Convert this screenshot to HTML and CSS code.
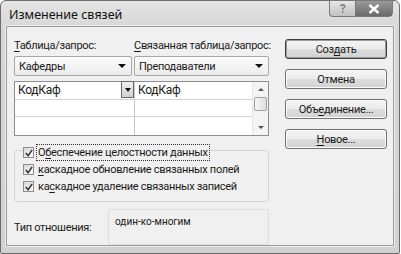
FILE: index.html
```html
<!DOCTYPE html>
<html>
<head>
<meta charset="utf-8">
<link rel="stylesheet" href="styles.css">
</head>
<body>
<div class="win">
  <div class="titlebar">
    <span class="title">Изменение связей</span>
    <div class="caps">
      <span class="cap help">?</span>
      <span class="cap close"><svg width="12" height="10" viewBox="0 0 12 10"><path d="M1.5 1 L10.5 9 M10.5 1 L1.5 9" stroke="#fff" stroke-width="2.4"/></svg></span>
    </div>
  </div>
  <div class="client">
    <div class="left">
      <div class="pickers">
        <div class="picker p1">
          <div class="lbl"><u>Т</u>аблица/запрос:</div>
          <div class="combo"><span>Кафедры</span><span class="arrow"></span></div>
        </div>
        <div class="picker p2">
          <div class="lbl"><u>С</u>вязанная таблица/запрос:</div>
          <div class="combo"><span>Преподаватели</span><span class="arrow"></span></div>
        </div>
      </div>
      <div class="grid">
        <div class="col c1">
          <div class="cell"><span>КодКаф</span><span class="dd"><span class="arrow"></span></span></div>
          <div class="cell"></div>
          <div class="cell last"></div>
        </div>
        <div class="col c2">
          <div class="cell"><span>КодКаф</span></div>
          <div class="cell"></div>
          <div class="cell last"></div>
        </div>
        <div class="scroll">
          <span class="sarrow up"></span>
          <span class="thumb"></span>
          <span class="sarrow down"></span>
        </div>
      </div>
      <div class="group">
        <div class="chk focus"><span class="box"><svg width="8" height="8" viewBox="0 0 9 9"><path d="M1 4.5 L3.5 7.5 L8 1" fill="none" stroke="#333" stroke-width="1.7"/></svg></span><span class="ctext">О<u>б</u>еспечение целостности данных</span></div>
        <div class="chk"><span class="box"><svg width="8" height="8" viewBox="0 0 9 9"><path d="M1 4.5 L3.5 7.5 L8 1" fill="none" stroke="#333" stroke-width="1.7"/></svg></span><span class="ctext"><u>к</u>аскадное обновление связанных полей</span></div>
        <div class="chk"><span class="box"><svg width="8" height="8" viewBox="0 0 9 9"><path d="M1 4.5 L3.5 7.5 L8 1" fill="none" stroke="#333" stroke-width="1.7"/></svg></span><span class="ctext">ка<u>с</u>кадное удаление связанных записей</span></div>
      </div>
      <div class="typerow">
        <span class="tlabel">Тип отношения:</span>
        <div class="tbox">один-ко-многим</div>
      </div>
    </div>
    <div class="buttons">
      <div class="btn default">Соз<u>д</u>ать</div>
      <div class="btn">Отмена</div>
      <div class="btn">Объ<u>е</u>динение...</div>
      <div class="btn"><u>Н</u>овое...</div>
    </div>
  </div>
</div>
</body>
</html>
```

FILE: styles.css
```css
html, body {
  margin: 0;
  padding: 0;
  background: #ffffff;
}
body {
  width: 401px;
  height: 254px;
  overflow: hidden;
  font-family: Roboto, "Noto Sans", sans-serif;
  font-size: 11px;
  letter-spacing: -0.3px;
  color: #1a1a1a;
}
u { text-decoration: underline; text-underline-offset: 2px; }
.win {
  box-sizing: border-box;
  width: 400px;
  height: 254px;
  border: 1px solid #6c6c6c;
  border-radius: 6px 6px 2px 2px;
  background: linear-gradient(#e4e4e4, #d6d6d6 30px, #d2d2d2);
  display: flex;
  flex-direction: column;
  padding: 0 5px 7px 5px;
}
.titlebar {
  height: 25px;
  display: flex;
  align-items: flex-start;
}
.title {
  font-family: "Noto Sans", sans-serif;
  font-size: 12.5px;
  letter-spacing: 0;
  color: #111;
  margin: 5px 0 0 3px;
}
.caps {
  margin-left: auto;
  margin-right: 1px;
  display: flex;
  margin-top: -1px;
}
.cap {
  height: 17px;
  display: flex;
  align-items: center;
  justify-content: center;
  box-sizing: border-box;
  border: 1px solid #7a7a7a;
}
.help {
  width: 26px;
  border-radius: 0 0 0 4px;
  border-right: none;
  background: linear-gradient(#e6e6e6, #c2c2c2);
  color: #7a7a7a;
  font-size: 12px;
  font-weight: bold;
  text-shadow: 0 0 1px #fff;
}
.close {
  width: 38px;
  border-radius: 0 0 4px 0;
  background: linear-gradient(#9a9a9a, #6a6a6a);
}
.client {
  flex: 1;
  background: #f0f0f0;
  border: 1px solid #9c9c9c;
  box-shadow: 0 0 0 1px #ececec;
  display: flex;
  padding: 11px 0 0 7px;
}
.left {
  width: 255px;
  display: flex;
  flex-direction: column;
}
.pickers {
  display: flex;
  gap: 2px;
}
.picker.p1 { width: 118px; }
.picker.p2 { width: 135px; }
.lbl {
  height: 16px;
  line-height: 16px;
  white-space: nowrap;
}
.combo {
  box-sizing: border-box;
  margin-top: 2px;
  height: 20px;
  border: 1px solid #a8a8a8;
  border-radius: 2px;
  background: linear-gradient(#fbfbfb, #ececec);
  display: flex;
  align-items: center;
  padding-left: 4px;
  justify-content: space-between;
}
.arrow {
  width: 0;
  height: 0;
  border-left: 4px solid transparent;
  border-right: 4px solid transparent;
  border-top: 4px solid #111;
  margin-right: 5px;
}
.grid {
  margin-top: 5px;
  height: 55px;
  box-sizing: border-box;
  border: 1px solid #8e8e8e;
  background: #fff;
  display: flex;
}
.col { display: flex; flex-direction: column; }
.c1 { width: 119px; border-right: 1px solid #c8c8c8; }
.c2 { flex: 1; }
.cell {
  height: 18px;
  box-sizing: border-box;
  border-bottom: 1px solid #d2d2d2;
  display: flex;
  align-items: center;
  padding-left: 3px;
  font-size: 12px;
  justify-content: space-between;
}
.cell.last { border-bottom: none; }
.dd {
  box-sizing: border-box;
  width: 13px;
  height: 17px;
  margin-top: -1px;
  border: 1px solid #6a6a6a;
  background: linear-gradient(#f0f0f0, #d0d0d0);
  display: flex;
  align-items: center;
  justify-content: center;
}
.dd .arrow { margin: 0; border-left-width: 3.5px; border-right-width: 3.5px; border-top-width: 4px; }
.scroll {
  width: 15px;
  background: #f4f4f4;
  border-left: 1px solid #e6e6e6;
  display: flex;
  flex-direction: column;
  align-items: center;
}
.sarrow {
  width: 0; height: 0;
  border-left: 3px solid transparent;
  border-right: 3px solid transparent;
}
.sarrow.up { border-bottom: 3px solid #555; margin-top: 6px; }
.sarrow.down { border-top: 3px solid #555; margin-top: auto; margin-bottom: 6px; }
.thumb {
  box-sizing: border-box;
  width: 13px;
  height: 14px;
  margin-top: 6px;
  border: 1px solid #a0a0a0;
  border-radius: 2px;
  background: linear-gradient(90deg, #f6f6f6, #dedede);
}
.group {
  margin-top: 14px;
  box-sizing: border-box;
  height: 52px;
  border: 1px solid #d6d6d6;
  border-radius: 3px;
  padding-left: 8px;
  display: flex;
  flex-direction: column;
}
.chk {
  height: 17px;
  display: flex;
  align-items: center;
}
.chk.focus { margin-top: -7px; }
.box {
  box-sizing: border-box;
  width: 11px;
  height: 11px;
  border: 1px solid #8e8e8e;
  background: linear-gradient(135deg, #d8d8d8, #fafafa);
  display: flex;
  align-items: center;
  justify-content: center;
  margin-right: 3px;
}
.ctext {
  padding: 0 1px;
  line-height: 15px;
  white-space: nowrap;
}
.focus .ctext {
  outline: 1px dotted #333;
  background: #f0f0f0;
}
.typerow {
  margin-top: 7px;
  display: flex;
  align-items: center;
}
.tlabel { width: 94px; }
.tbox {
  box-sizing: border-box;
  width: 161px;
  height: 36px;
  border: 1px solid #dcdcdc;
  border-radius: 2px;
  padding: 6px 0 0 6px;
  align-self: flex-start;
  font-size: 10px;
  letter-spacing: 0;
}
.buttons {
  margin-left: 16px;
  width: 102px;
  display: flex;
  flex-direction: column;
  gap: 10px;
  padding-top: 1px;
}
.btn {
  box-sizing: border-box;
  height: 20px;
  border: 1px solid #707070;
  border-radius: 3px;
  background: linear-gradient(#f4f4f4 0%, #ebebeb 50%, #dddddd 51%, #d2d2d2 100%);
  display: flex;
  align-items: center;
  justify-content: center;
  box-shadow: inset 0 0 0 1px #fcfcfc;
}
.btn.default {
  border-color: #3c3c3c;
  box-shadow: inset 0 0 0 1px #9a9a9a;
}
```
